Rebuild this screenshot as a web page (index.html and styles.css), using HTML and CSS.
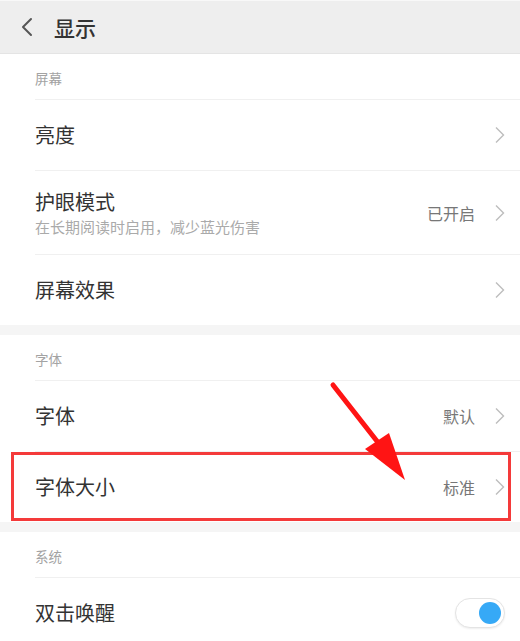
FILE: index.html
```html
<!DOCTYPE html>
<html lang="zh-CN">
<head>
<meta charset="utf-8">
<title>显示</title>
<link rel="stylesheet" href="styles.css">
</head>
<body>
<div class="page">
  <header class="topbar">
    <svg class="back" width="14" height="20" viewBox="0 0 14 20"><path d="M11 2 L3 10 L11 18" fill="none" stroke="#555" stroke-width="2" stroke-linecap="round" stroke-linejoin="round"/></svg>
    <span class="title">显示</span>
  </header>

  <div class="group-title">屏幕</div>
  <div class="row"><span class="label">亮度</span><span class="right"><svg class="chev" width="12" height="18" viewBox="0 0 12 18"><path d="M2 1.5 L9.5 9 L2 16.5" fill="none" stroke="#bdbdbd" stroke-width="1.4"/></svg></span></div>
  <div class="row tall">
    <span class="texts"><span class="label">护眼模式</span><span class="sub">在长期阅读时启用，减少蓝光伤害</span></span>
    <span class="right"><span class="value">已开启</span><svg class="chev" width="12" height="18" viewBox="0 0 12 18"><path d="M2 1.5 L9.5 9 L2 16.5" fill="none" stroke="#bdbdbd" stroke-width="1.4"/></svg></span>
  </div>
  <div class="row"><span class="label">屏幕效果</span><span class="right"><svg class="chev" width="12" height="18" viewBox="0 0 12 18"><path d="M2 1.5 L9.5 9 L2 16.5" fill="none" stroke="#bdbdbd" stroke-width="1.4"/></svg></span></div>

  <div class="band"></div>

  <div class="group-title">字体</div>
  <div class="row"><span class="label">字体</span><span class="right"><span class="value">默认</span><svg class="chev" width="12" height="18" viewBox="0 0 12 18"><path d="M2 1.5 L9.5 9 L2 16.5" fill="none" stroke="#bdbdbd" stroke-width="1.4"/></svg></span></div>
  <div class="row highlighted"><span class="label">字体大小</span><span class="right"><span class="value">标准</span><svg class="chev" width="12" height="18" viewBox="0 0 12 18"><path d="M2 1.5 L9.5 9 L2 16.5" fill="none" stroke="#bdbdbd" stroke-width="1.4"/></svg></span><span class="mark"></span></div>

  <div class="band"></div>

  <div class="group-title">系统</div>
  <div class="row"><span class="label">双击唤醒</span><span class="right"><span class="switch"><span class="knob"></span></span></span></div>

  <svg class="arrow" width="520" height="641" viewBox="0 0 520 641">
    <line x1="333" y1="385" x2="380" y2="445" stroke="#ff1414" stroke-width="5" stroke-linecap="round"/>
    <polygon points="405,480 365,449 389,433" fill="#ff1414"/>
  </svg>
</div>
</body>
</html>
```

FILE: styles.css
```css
html, body {
  margin: 0;
  padding: 0;
  background: #ffffff;
}
body {
  width: 520px;
  height: 641px;
  overflow: hidden;
  font-family: "Noto Sans CJK SC", "Noto Sans", sans-serif;
  color: #333;
}
.page {
  position: relative;
  width: 520px;
  height: 641px;
  overflow: hidden;
}
.topbar {
  height: 54px;
  box-sizing: border-box;
  background: #eeeeee;
  border-top: 1px solid #f8f8f8;
  border-bottom: 1px solid #e4e4e4;
  display: flex;
  align-items: center;
  padding-left: 20px;
}
.back {
  display: block;
  margin-right: 20px;
}
.title {
  font-size: 21px;
  font-weight: 500;
  color: #333;
  line-height: 1;
}
.group-title {
  height: 45px;
  box-sizing: border-box;
  padding: 3px 0 0 35px;
  display: flex;
  align-items: center;
  font-size: 13.5px;
  color: #a3a3a3;
}
.row {
  position: relative;
  margin-left: 35px;
  height: 71px;
  box-sizing: border-box;
  border-top: 1px solid #f0f0f0;
  display: flex;
  align-items: center;
  justify-content: space-between;
  padding-right: 14px;
}
.row.tall {
  height: 84px;
}
.label {
  font-size: 20px;
  color: #333;
  line-height: 1.2;
}
.texts {
  display: flex;
  flex-direction: column;
}
.sub {
  font-size: 15px;
  color: #aaaaaa;
  line-height: 1.2;
  margin-top: 4px;
}
.right {
  display: flex;
  align-items: center;
}
.value {
  font-size: 16px;
  color: #777;
  margin-right: 19px;
}
.chev {
  display: block;
}
.band {
  height: 10px;
  background: #f5f5f5;
}
.switch {
  display: block;
  width: 50px;
  height: 30px;
  box-sizing: border-box;
  border: 1px solid #e4e4e4;
  border-radius: 15px;
  background: #fff;
  box-shadow: 0 1px 2px rgba(0,0,0,0.07);
  position: relative;
  margin-right: 1px;
}
.knob {
  position: absolute;
  right: 3px;
  top: 3px;
  width: 22px;
  height: 22px;
  border-radius: 50%;
  background: #36a9f6;
}
.mark {
  position: absolute;
  left: -24px;
  right: 9px;
  top: 0;
  bottom: 1px;
  border: 3px solid #f43a3a;
  pointer-events: none;
}
.arrow {
  position: absolute;
  left: 0;
  top: 0;
  pointer-events: none;
}
```
